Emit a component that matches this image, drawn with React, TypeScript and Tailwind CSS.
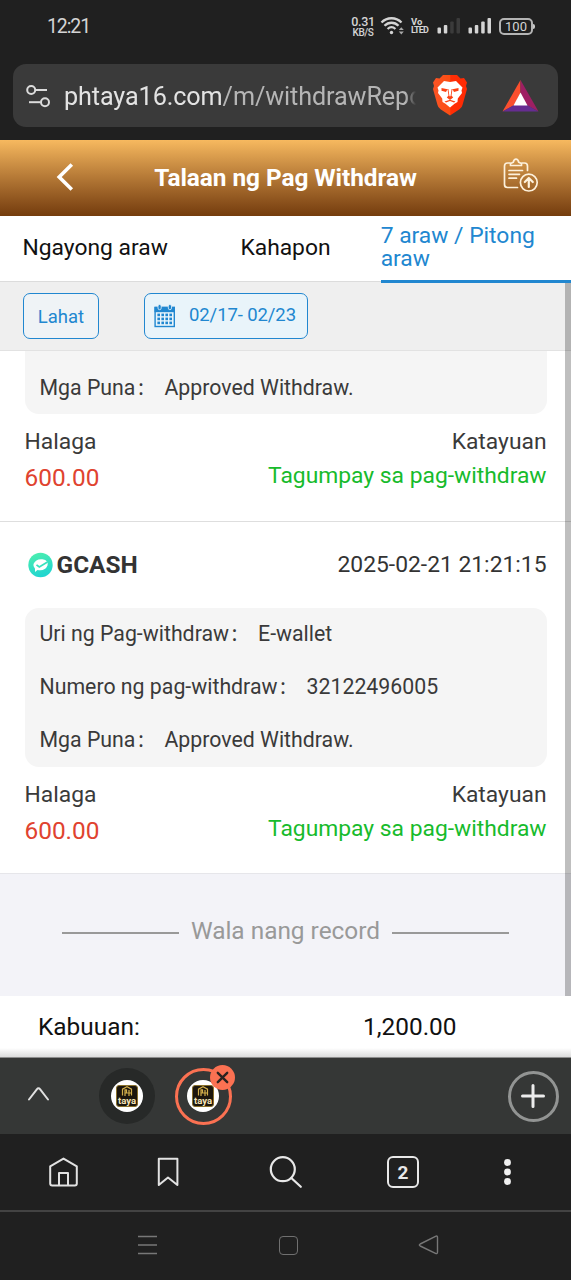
import React, { useState } from "react";
import clsx from "clsx";

interface IDetail {
  label: string;
  value: string;
}

interface IRecord {
  id: string;
  bank?: string;
  date?: string;
  details: IDetail[];
  amount: string;
  status: string;
}

const records: IRecord[] = [
  {
    id: "1",
    details: [{ label: "Mga Puna", value: "Approved Withdraw." }],
    amount: "600.00",
    status: "Tagumpay sa pag-withdraw",
  },
  {
    id: "2",
    bank: "GCASH",
    date: "2025-02-21 21:21:15",
    details: [
      { label: "Uri ng Pag-withdraw", value: "E-wallet" },
      { label: "Numero ng pag-withdraw", value: "32122496005" },
      { label: "Mga Puna", value: "Approved Withdraw." },
    ],
    amount: "600.00",
    status: "Tagumpay sa pag-withdraw",
  },
];

const tabs = ["Ngayong araw", "Kahapon", "7 araw / Pitong araw"];

function StatusBar() {
  return (
    <div className="flex h-[52px] items-center text-[#d4d4d4]">
      <span className="ml-[47px] w-[60px] pt-px text-[19.5px] leading-none tracking-[-1.1px]">12:21</span>
      <div className="ml-[244px] flex w-[24px] flex-col items-center pt-px font-medium">
        <span className="text-[12.5px] leading-[11px] tracking-[-0.3px]">0.31</span>
        <span className="text-[10px] leading-[11px] tracking-[-0.4px]">KB/S</span>
      </div>
      <svg className="ml-[5px]" width="25" height="20" viewBox="0 0 25 20" fill="none" stroke="#d4d4d4">
        <path d="M1.500 6.500C7 .8 16 .8 21.500 6.500" strokeWidth="2.300" />
        <path d="M4.500 9.800C8.500 5.700 14.500 5.700 18.500 9.800" strokeWidth="2.300" />
        <path d="M7.600 13C10 10.700 13 10.700 15.400 13" strokeWidth="2.300" />
        <circle cx="11.500" cy="16.500" r="1.700" fill="#d4d4d4" stroke="none" />
        <path d="M18.800 14L21.300 11.200L23.800 14ZM18.800 15.600L21.300 18.400L23.800 15.600Z" fill="#a8a8a8" stroke="none" />
      </svg>
      <div className="ml-[6px] flex w-[20px] flex-col font-bold">
        <span className="text-[9.5px] leading-[9px]">Vo</span>
        <span className="text-[9px] leading-[9px] tracking-[-0.8px]">LTED</span>
      </div>
      <svg className="ml-[6px]" width="24" height="18" viewBox="0 0 24 18" fill="#d4d4d4">
        <rect x="0.500" y="10.500" width="3.500" height="6" rx="1" />
        <rect x="6.800" y="8" width="3.500" height="8.500" rx="1" />
        <rect x="13.200" y="4.500" width="3.500" height="12" rx="1" fill="#3b3b3b" />
        <rect x="19.500" y="1" width="3.500" height="15.500" rx="1" fill="#3b3b3b" />
      </svg>
      <svg className="ml-[7px]" width="24" height="18" viewBox="0 0 24 18" fill="#d4d4d4">
        <rect x="0.500" y="10.500" width="3.500" height="6" rx="1" />
        <rect x="6.800" y="8" width="3.500" height="8.500" rx="1" />
        <rect x="13.200" y="4.500" width="3.500" height="12" rx="1" />
        <rect x="19.500" y="1" width="3.500" height="15.500" rx="1" />
      </svg>
      <div className="ml-[7px] flex h-[17px] w-[34px] items-center justify-center rounded-[5px] border-2 border-[#b4b4b4] text-[13px] leading-none">
        100
      </div>
      <span className="h-[5px] w-[2px] rounded-r bg-[#c8c8c8]" />
    </div>
  );
}

function BraveLogo() {
  return (
    <svg width="36" height="42" viewBox="0 0 36 42">
      <defs>
        <linearGradient id="brave" x1="0" x2="1" y1="0" y2="0">
          <stop offset="0" stopColor="#fb5426" />
          <stop offset="0.5" stopColor="#fb4d12" />
          <stop offset="0.52" stopColor="#ff2e05" />
          <stop offset="1" stopColor="#ff2a04" />
        </linearGradient>
      </defs>
      <path
        d="M11 1H25L28.500 4.500L32 4L35 8.500L34 12L35 15L30.500 31Q30 33.500 27.500 35.200L18 41.500L8.500 35.200Q6 33.500 5.500 31L1 15L2 12L1 8.500L4 4L7.500 4.500Z"
        fill="url(#brave)"
      />
      <path
        d="M18 8L24 7L30.500 13.500L29.500 16.500L30 19L25.800 24.500L25.500 28L22.500 29.800L18 33.500L13.500 29.800L10.500 28L10.200 24.500L6 19L6.500 16.500L5.500 13.500L12 7Z"
        fill="#fff"
      />
      <path
        d="M9.500 14L15.500 15.200L14 18L9.500 16.700ZM26.500 14L20.500 15.200L22 18L26.500 16.700ZM15.500 15L16.500 21.500L14.800 23.500L18 26L21.200 23.500L19.500 21.500L20.500 15L19.600 15L18.600 22L18 22.500L17.400 22L16.400 15ZM12.500 27.500L18 25.800L23.500 27.500L22 28.500L18 27L14 28.500Z"
        fill="#fb4316"
      />
    </svg>
  );
}

function AddressBar() {
  return (
    <div className="mx-[13px] mt-[12px] flex h-[63px] items-center rounded-[13px] bg-[#3a3a3a]">
      <svg className="ml-[12px]" width="26" height="24" viewBox="0 0 26 24" fill="none" stroke="#dcdcdc" strokeWidth="2">
        <circle cx="6.200" cy="6" r="4" />
        <path d="M10.500 6H22" />
        <circle cx="20" cy="18.200" r="4" />
        <path d="M4 18.200H15.500" />
      </svg>
      <div className="ml-[13px] w-[352px] overflow-hidden whitespace-nowrap pt-[3px] text-[25.2px] leading-[36px] tracking-[-0.1px] text-[#e3e3e3] [mask-image:linear-gradient(to_right,black_97%,transparent)]">
        phtaya16.com<span className="text-[#b5b5b5]">/m/withdrawRepo</span>
      </div>
      <div className="ml-[16px] pb-[2px]">
        <BraveLogo />
      </div>
      <svg className="ml-[34px]" width="37" height="34" viewBox="0 0 37 34">
        <path d="M18.500 1L0.500 32.500L12.500 26L18.500 14Z" fill="#fa4f2e" />
        <path d="M18.500 1L36.500 32.500L24.500 26L18.500 14Z" fill="#9e1f63" />
        <path d="M0.500 32.500H36.500L25 26H12Z" fill="#662d91" />
        <path d="M18.500 13.500L25.500 26.500H11.500Z" fill="#fff" />
      </svg>
    </div>
  );
}

function PageHeader() {
  return (
    <header className="mt-[13px] flex h-[76px] items-center bg-gradient-to-b from-[#f7b95f] to-[#743c0d]">
      <svg className="mb-[2px] ml-[56px]" width="18" height="30" viewBox="0 0 18 30" fill="none" stroke="#fff" strokeWidth="3.600">
        <path d="M15.800 2.500L3.200 15L15.800 27.500" />
      </svg>
      <h1 className="ml-[74px] w-[275px] whitespace-nowrap pt-px text-center text-[24.4px] leading-none font-bold tracking-[-0.06px] text-white">
        Talaan ng Pag Withdraw
      </h1>
      <svg className="mb-[6px] ml-[79.5px]" width="36" height="35" viewBox="0 0 36 35" fill="none" stroke="#fdf1dc" strokeWidth="1.700" strokeLinecap="round" strokeLinejoin="round">
        <path d="M7 5H4.500Q1.500 5 1.500 8V26.500Q1.500 29.500 4.500 29.500H14.500M19 5H21.500Q24.500 5 24.500 8V12.500" />
        <path d="M7.500 7.500V5.500L10.300 4.200Q11 1.200 13 1.200T15.700 4.200L18.500 5.500V7.500Z" />
        <path d="M6 12.500H19.500M6 16.300H16.500M6 20.200H13.500" />
        <circle cx="25.800" cy="24.600" r="8.400" />
        <path d="M25.800 29V20.500M21.800 24L25.800 20L29.800 24" strokeWidth="2.200" />
      </svg>
    </header>
  );
}

function CalendarIcon() {
  const dots: React.ReactElement[] = [];
  for (let row = 0; row < 3; row++) {
    for (let col = 0; col < 4; col++) {
      dots.push(<rect key={`${row}-${col}`} x={3.4 + col * 4} y={9.6 + row * 4} width="2.600" height="2.600" fill="#2187d0" />);
    }
  }
  return (
    <svg width="22" height="24" viewBox="0 0 22 24">
      <rect x="1.100" y="3.500" width="19.200" height="19" fill="#eaf5fb" stroke="#2187d0" strokeWidth="1.400" />
      <path d="M0.500 2.800H21V8.200H0.500Z" fill="#2187d0" />
      <rect x="4" y="0.500" width="3.200" height="5.200" rx="1.600" fill="#2187d0" stroke="#eaf5fb" strokeWidth="0.800" />
      <rect x="14.300" y="0.500" width="3.200" height="5.200" rx="1.600" fill="#2187d0" stroke="#eaf5fb" strokeWidth="0.800" />
      {dots}
    </svg>
  );
}

function RecordItem({ record }: { record: IRecord }) {
  return (
    <div className="shrink-0 border-b border-[#dedede] px-[24.5px]">
      {record.bank && (
        <div className="flex h-[86px] items-center text-[#333]">
          <svg className="ml-[3px]" width="25" height="26" viewBox="0 0 25 26">
            <defs>
              <linearGradient id="wallet" x1="0" x2="0.300" y1="0" y2="1">
                <stop offset="0" stopColor="#4ff0ac" />
                <stop offset="1" stopColor="#22d6cf" />
              </linearGradient>
            </defs>
            <circle cx="12.500" cy="13" r="12.200" fill="url(#wallet)" />
            <path d="M5.500 12Q8 6.500 14.500 7.300Q21 8.500 19.500 13.500Q17 19.500 9.500 18L7 20V16.700Q4.800 14.500 5.500 12Z" fill="#fff" />
            <path d="M8.500 12.800L11.300 15L19.500 10" fill="none" stroke="#37e2be" strokeWidth="1.700" />
          </svg>
          <span className="ml-[4px] text-[24.4px] font-bold">{record.bank}</span>
          <span className="ml-auto text-[22.84px]">{record.date}</span>
        </div>
      )}
      <div
        className={clsx(
          "bg-[#f5f5f5] pl-[15px] text-[21.3px] text-[#3a3a3a]",
          record.bank ? "rounded-[14px]" : "rounded-b-[14px] pt-[10px]"
        )}
      >
        {record.details.map((detail) => (
          <div
            key={detail.label}
            className={clsx("flex h-[53px] items-center leading-[30px]", record.bank ? "pb-[2px]" : "pt-px")}
          >
            <span>{detail.label}</span>
            <span className="w-[29px] pt-[2px] pl-px text-[18px]">：</span>
            <span>{detail.value}</span>
          </div>
        ))}
      </div>
      <div className="flex h-[107px] justify-between pt-[10px] text-[22.84px] text-[#3a3a3a]">
        <div>
          <p className="leading-[36px]">Halaga</p>
          <p className="text-[24.4px] leading-[35px] text-[#e0432f]">{record.amount}</p>
        </div>
        <div className="text-right">
          <p className="leading-[36px]">Katayuan</p>
          <p className="leading-[32px] text-[#17bb2c]">{record.status}</p>
        </div>
      </div>
    </div>
  );
}

function TayaLogo() {
  return (
    <div className="flex size-[32px] items-center justify-center rounded-full bg-white">
      <div className="flex size-[22px] flex-col items-center overflow-hidden rounded-[3px] border border-[#8a712c] bg-[#1c160d]">
        <svg width="12" height="11" viewBox="0 0 12 11" fill="none" stroke="#d3af4b" strokeWidth="1.200">
          <path d="M1.500 9.500V3.200L6 0.800L10.500 3.200V9.500M4 10V3.800H5.500V7H4M8 4V10M6.200 7H10" />
        </svg>
        <span className="text-[9.5px] leading-[7px] font-bold text-[#f6e5b8]">taya</span>
      </div>
    </div>
  );
}

function TabStrip() {
  return (
    <div className="flex h-[76px] items-center bg-[#353736]">
      <svg className="mb-[4px] ml-[27px]" width="23" height="16" viewBox="0 0 23 16" fill="none" stroke="#e0e0e0" strokeWidth="2" strokeLinecap="round">
        <path d="M2 13.500L9.800 3.300Q11.500 1.200 13.200 3.300L21 13.500" />
      </svg>
      <div className="ml-[49px] flex size-[56px] items-center justify-center rounded-full bg-[#272928]">
        <TayaLogo />
      </div>
      <div className="relative ml-[19.5px] flex size-[57px] items-center justify-center rounded-full border-[3px] border-[#fb7152]">
        <TayaLogo />
        <div className="absolute -top-[6px] -right-[6px] flex size-[25px] items-center justify-center rounded-full bg-[#fb7152]">
          <svg width="13" height="13" viewBox="0 0 13 13" stroke="#2b2320" strokeWidth="2.400" strokeLinecap="round">
            <path d="M1.800 1.800L11.200 11.200M11.200 1.800L1.800 11.200" />
          </svg>
        </div>
      </div>
      <div className="mr-[12.5px] ml-auto flex size-[51px] items-center justify-center rounded-full border-[3px] border-[#929493]">
        <svg width="24" height="24" viewBox="0 0 24 24" stroke="#ececec" strokeWidth="3" strokeLinecap="round">
          <path d="M12 1.500V22.500M1.500 12H22.500" />
        </svg>
      </div>
    </div>
  );
}

function BottomNav() {
  return (
    <nav className="flex h-[78px] items-center border-b-2 border-[#434343]">
      <svg className="ml-[48px]" width="31" height="30" viewBox="0 0 31 30" fill="none" stroke="#e2e2e2" strokeWidth="2" strokeLinejoin="round">
        <path d="M2.200 9.300L15.500 1.600L28.800 9.300V26.500Q28.800 28.500 26.800 28.500H4.200Q2.200 28.500 2.200 26.500Z" />
        <path d="M11 28.500V16H20V28.500" />
      </svg>
      <svg className="ml-[78px]" width="22" height="30" viewBox="0 0 22 30" fill="none" stroke="#e2e2e2" strokeWidth="2" strokeLinejoin="round">
        <path d="M1.800 1.800H20.400V28L11 20.500L1.800 28Z" />
      </svg>
      <svg className="ml-[90px]" width="34" height="34" viewBox="0 0 34 34" fill="none" stroke="#e8e8e8" strokeWidth="2.200" strokeLinecap="round">
        <circle cx="13.800" cy="14.200" r="12" />
        <path d="M22.300 23L31.800 31.800" />
      </svg>
      <div className="ml-[84px] flex size-[32px] items-center justify-center rounded-[6px] border-2 border-[#e8e8e8] text-[19px] leading-none font-bold text-[#e8e8e8]">
        2
      </div>
      <svg className="ml-[84px]" width="9" height="28" viewBox="0 0 9 28" fill="#f0f0f0">
        <circle cx="4.500" cy="4.500" r="3.400" />
        <circle cx="4.500" cy="14" r="3.400" />
        <circle cx="4.500" cy="23.500" r="3.400" />
      </svg>
    </nav>
  );
}

function SystemNav() {
  return (
    <div className="flex h-[68px] items-center pb-[2px]">
      <svg className="ml-[137px]" width="21" height="22" viewBox="0 0 21 22" stroke="#777" strokeWidth="1.400">
        <path d="M1 2.500H20M1 11H20M1 19.500H20" />
      </svg>
      <span className="ml-[121px] size-[19px] rounded-[4px] border-[1.500px] border-[#707070]" />
      <svg className="ml-[120px]" width="22" height="22" viewBox="0 0 22 22" fill="none" stroke="#777" strokeWidth="1.400" strokeLinejoin="round">
        <path d="M2.200 10L17.500 2.300Q19.500 1.500 19.500 3.500V18Q19.500 20.300 17.500 19.300L2.200 12Q0.500 11 2.200 10Z" />
      </svg>
    </div>
  );
}

export default function App() {
  const [activeTab, setActiveTab] = useState(2);

  return (
    <div className="flex h-[1280px] w-[571px] flex-col overflow-hidden bg-[#202020] font-['Roboto','Noto_Sans_CJK_SC',sans-serif]">
      <StatusBar />
      <AddressBar />
      <PageHeader />

      <main className="relative bg-white">
        <div className="grid h-[66px] grid-cols-3 border-b border-[#dcdcdc]">
          {tabs.map((tab, index) => (
            <button
              key={tab}
              onClick={() => setActiveTab(index)}
              className={clsx(
                "-mb-[1px] flex items-center text-[22.84px] leading-[22.84px]",
                index === activeTab
                  ? "relative z-10 h-[67px] border-b-[3px] border-[#2187d0] text-left text-[#2187d0]"
                  : "h-[64px] justify-center text-[#111]"
              )}
            >
              {tab}
            </button>
          ))}
        </div>

        <div className="flex h-[69px] items-start border-b border-[#e2e2e2] bg-[#efefef] pt-[11px] text-[18.5px] text-[#2187d0]">
          <button className="ml-[23px] h-[46px] w-[76px] rounded-[7px] border-[1.500px] border-[#2187d0] bg-[#eff3f6] pt-[3px]">
            Lahat
          </button>
          <button className="ml-[45px] flex h-[46px] w-[164px] items-center rounded-[7px] border-[1.500px] border-[#2187d0] bg-[#e9f4fa] pl-[9px]">
            <CalendarIcon />
            <span className="ml-[13px] whitespace-nowrap tracking-[-0.1px]">02/17- 02/23</span>
          </button>
        </div>

        <div className="flex h-[522px] flex-col overflow-hidden">
          {records.map((record) => (
            <RecordItem key={record.id} record={record} />
          ))}
        </div>

        <div className="flex h-[123px] items-center justify-center gap-[12px] border-t border-[#e6e6ea] bg-[#f3f3f8] pb-[7px] text-[24.4px] text-[#999]">
          <span className="mt-[3px] h-[1.500px] w-[117px] bg-[#999]" />
          Wala nang record
          <span className="mt-[3px] h-[1.500px] w-[117px] bg-[#999]" />
        </div>

        <div className="flex h-[52px] items-center pt-[11px] text-[24.4px] text-[#111]">
          <span className="w-[363px] pl-[38px]">Kabuuan:</span>
          <span>1,200.00</span>
        </div>
        <div className="h-[10px] border-b border-[#8d8d8d] bg-gradient-to-b from-white to-[#dcdcdc]" />

        <div className="absolute top-[67px] right-0 z-20 h-[713px] w-[6px] bg-black/25" />
      </main>

      <TabStrip />
      <BottomNav />
      <SystemNav />
    </div>
  );
}
